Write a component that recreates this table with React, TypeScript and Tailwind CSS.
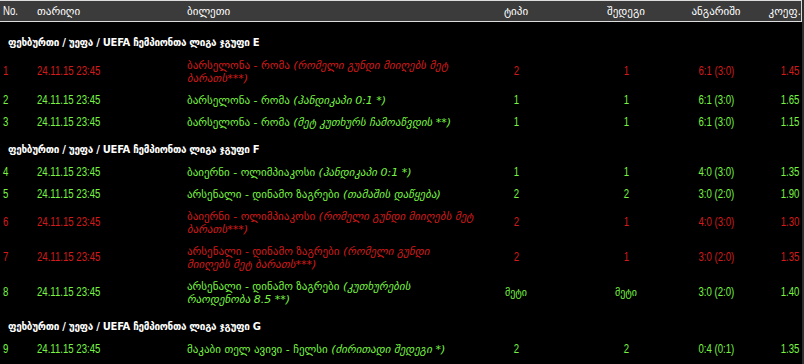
import React from "react";

type Row = {
  n: string;
  m: string;
  note: string;
  type: string;
  res: string;
  score: string;
  coef: string;
  lost?: boolean;
};

type Section = { title: string; rows: Row[] };

const DATE = "24.11.15 23:45";

const sections: Section[] = [
  {
    title: "ფეხბურთი / უეფა / UEFA ჩემპიონთა ლიგა ჯგუფი E",
    rows: [
      { n: "1", m: "ბარსელონა - რომა", note: "(რომელი გუნდი მიიღებს მეტ|ბარათს***)", type: "2", res: "1", score: "6:1 (3:0)", coef: "1.45", lost: true },
      { n: "2", m: "ბარსელონა - რომა", note: "(ჰანდიკაპი 0:1 *)", type: "1", res: "1", score: "6:1 (3:0)", coef: "1.65" },
      { n: "3", m: "ბარსელონა - რომა", note: "(მეტ კუთხურს ჩამოაწვდის **)", type: "1", res: "1", score: "6:1 (3:0)", coef: "1.15" },
    ],
  },
  {
    title: "ფეხბურთი / უეფა / UEFA ჩემპიონთა ლიგა ჯგუფი F",
    rows: [
      { n: "4", m: "ბაიერნი - ოლიმპიაკოსი", note: "(ჰანდიკაპი 0:1 *)", type: "1", res: "1", score: "4:0 (3:0)", coef: "1.35" },
      { n: "5", m: "არსენალი - დინამო ზაგრები", note: "(თამაშის დაწყება)", type: "2", res: "2", score: "3:0 (2:0)", coef: "1.90" },
      { n: "6", m: "ბაიერნი - ოლიმპიაკოსი", note: "(რომელი გუნდი მიიღებს მეტ|ბარათს***)", type: "2", res: "1", score: "4:0 (3:0)", coef: "1.30", lost: true },
      { n: "7", m: "არსენალი - დინამო ზაგრები", note: "(რომელი გუნდი|მიიღებს მეტ ბარათს***)", type: "2", res: "1", score: "3:0 (2:0)", coef: "1.35", lost: true },
      { n: "8", m: "არსენალი - დინამო ზაგრები", note: "(კუთხურების|რაოდენობა 8.5 **)", type: "მეტი", res: "მეტი", score: "3:0 (2:0)", coef: "1.40" },
    ],
  },
  {
    title: "ფეხბურთი / უეფა / UEFA ჩემპიონთა ლიგა ჯგუფი G",
    rows: [
      { n: "9", m: "მაკაბი თელ ავივი - ჩელსი", note: "(ძირითადი შედეგი *)", type: "2", res: "2", score: "0:4 (0:1)", coef: "1.35" },
    ],
  },
];

const narrow = "font-['Liberation_Sans_Narrow','Arial_Narrow','Liberation_Sans',Arial,sans-serif]";
const geo = "font-['DejaVu_Sans','Noto_Sans',sans-serif]";
const grid = "grid grid-cols-[37px_150px_273px_112px_108px_72px_50px]";

function isGeo(s: string) {
  return /[\u10A0-\u10FF]/.test(s);
}

function Num({ v, origin }: { v: string; origin: string }) {
  return (
    <span className={`block ${narrow} whitespace-nowrap text-[12px] leading-[13px] scale-x-[0.8] ${origin}`}>{v}</span>
  );
}

function Cell({ v, className, origin }: { v: string; className: string; origin: string }) {
  return (
    <div className={`flex h-full items-center ${className}`}>
      {isGeo(v) ? (
        <span className={`block ${geo} text-[10px] leading-[13px]`}>{v}</span>
      ) : (
        <Num v={v} origin={origin} />
      )}
    </div>
  );
}

function Ticket({ m, note }: { m: string; note: string }) {
  const parts = note.split("|");
  return (
    <div className={`${geo} text-[11px] leading-[13px] whitespace-nowrap`}>
      {m}{" "}
      <span className="italic">
        {parts.map((p, i) => (
          <React.Fragment key={i}>
            {i > 0 && <br />}
            {p}
          </React.Fragment>
        ))}
      </span>
    </div>
  );
}

export default function App() {
  return (
    <div className="flex min-h-screen w-[804px] bg-black text-[11px] leading-[13px]">
      <div className="w-[802px]">
        <div className={`${grid} h-[22px] items-center border-t border-b border-r border-[#dcdcdc] bg-[#3b3b3b] text-white`}>
          <div className="flex pl-[3px]">
            <Num v="No." origin="origin-left" />
          </div>
          <div className={`${geo} text-[11px] leading-[13px]`}>თარიღი</div>
          <div className={`${geo} text-[11px] leading-[13px]`}>ბილეთი</div>
          <div className={`${geo} text-center text-[11px] leading-[13px]`}>ტიპი</div>
          <div className={`${geo} text-center text-[11px] leading-[13px]`}>შედეგი</div>
          <div className={`${geo} text-center text-[11px] leading-[13px]`}>ანგარიში</div>
          <div className={`${geo} pr-[1px] text-right text-[11px] leading-[13px]`}>კოეფ.</div>
        </div>
        <div className="pt-[4px]">
          {sections.map((s) => (
            <div key={s.title}>
              <div className={`${geo} pl-[8px] pt-[10px] pb-[5px] text-[10px] font-bold leading-[13px] tracking-[-0.3px] text-white`}>
                {s.title}
              </div>
              {s.rows.map((r) => {
                const color = r.lost ? "text-[#d41a1a]" : "text-[#78f542]";
                return (
                  <div key={r.n} className={`${grid} items-stretch py-[4.5px] ${color}`}>
                    <Cell v={r.n} className="justify-start pl-[3px]" origin="origin-left" />
                    <Cell v={DATE} className="justify-start" origin="origin-left" />
                    <Ticket m={r.m} note={r.note} />
                    <Cell v={r.type} className="justify-center" origin="origin-center" />
                    <Cell v={r.res} className="justify-center" origin="origin-center" />
                    <Cell v={r.score} className="justify-center" origin="origin-center" />
                    <Cell v={r.coef} className="justify-end pr-[3px]" origin="origin-right" />
                  </div>
                );
              })}
            </div>
          ))}
        </div>
      </div>
      <div className="w-[2px] bg-[#2f2f2f]" />
    </div>
  );
}
